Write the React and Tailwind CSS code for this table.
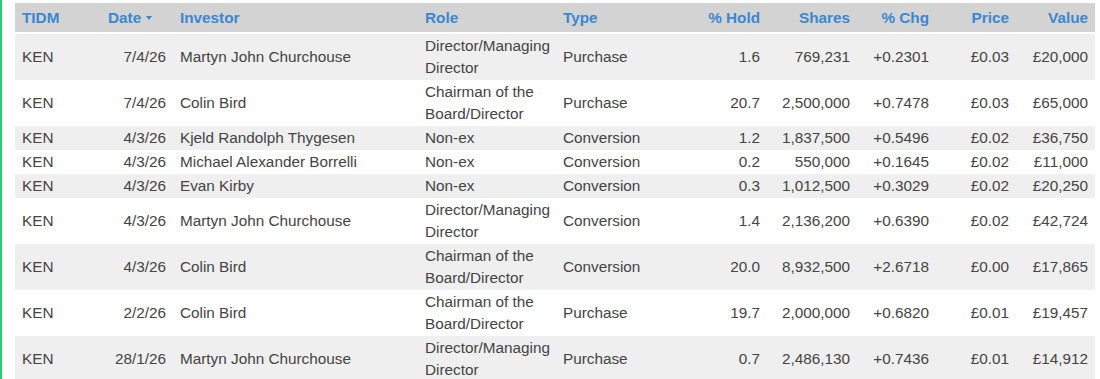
import React from "react";

const rows = [
  ["KEN", "7/4/26", "Martyn John Churchouse", "Director/Managing Director", "Purchase", "1.6", "769,231", "+0.2301", "£0.03", "£20,000"],
  ["KEN", "7/4/26", "Colin Bird", "Chairman of the Board/Director", "Purchase", "20.7", "2,500,000", "+0.7478", "£0.03", "£65,000"],
  ["KEN", "4/3/26", "Kjeld Randolph Thygesen", "Non-ex", "Conversion", "1.2", "1,837,500", "+0.5496", "£0.02", "£36,750"],
  ["KEN", "4/3/26", "Michael Alexander Borrelli", "Non-ex", "Conversion", "0.2", "550,000", "+0.1645", "£0.02", "£11,000"],
  ["KEN", "4/3/26", "Evan Kirby", "Non-ex", "Conversion", "0.3", "1,012,500", "+0.3029", "£0.02", "£20,250"],
  ["KEN", "4/3/26", "Martyn John Churchouse", "Director/Managing Director", "Conversion", "1.4", "2,136,200", "+0.6390", "£0.02", "£42,724"],
  ["KEN", "4/3/26", "Colin Bird", "Chairman of the Board/Director", "Conversion", "20.0", "8,932,500", "+2.6718", "£0.00", "£17,865"],
  ["KEN", "2/2/26", "Colin Bird", "Chairman of the Board/Director", "Purchase", "19.7", "2,000,000", "+0.6820", "£0.01", "£19,457"],
  ["KEN", "28/1/26", "Martyn John Churchouse", "Director/Managing Director", "Purchase", "0.7", "2,486,130", "+0.7436", "£0.01", "£14,912"],
];

// column widths and alignment
const cols = [
  { label: "TIDM", w: "w-[86px]", align: "text-left" },
  { label: "Date", w: "w-[72px]", align: "text-right", headAlign: "text-left", sort: true },
  { label: "Investor", w: "w-[245px]", align: "text-left" },
  { label: "Role", w: "w-[138px]", align: "text-left" },
  { label: "Type", w: "w-[124px]", align: "text-left" },
  { label: "% Hold", w: "w-[87px]", align: "text-right" },
  { label: "Shares", w: "w-[90px]", align: "text-right" },
  { label: "% Chg", w: "w-[79px]", align: "text-right" },
  { label: "Price", w: "w-[80px]", align: "text-right" },
  { label: "Value", w: "w-[79px]", align: "text-right" },
];

export default function App() {
  return (
    <div className="h-[379px] w-[1100px] overflow-hidden bg-white border-l-2 border-[#2ecc71] pl-[13px] pt-[3px] font-['Liberation_Sans',Arial,sans-serif] text-[15.3px] text-[#444]">
      <table className="table-fixed w-[1080px] border-separate border-spacing-0">
        <thead>
          <tr className="bg-[#d3d3d3]">
            {cols.map((c) => (
              <th
                key={c.label}
                className={`${c.w} ${c.headAlign || c.align} h-[31px] border-b-2 border-white px-[7px] font-bold leading-[22px] text-[#3b88d0]`}
              >
                {c.label}
                {c.sort && (
                  <svg className="ml-[5px] inline-block align-middle" width="6" height="4" viewBox="0 0 6 4">
                    <path d="M0 0h6L3 4z" fill="#3b88d0" />
                  </svg>
                )}
              </th>
            ))}
          </tr>
        </thead>
        <tbody>
          {rows.map((r, i) => (
            <tr key={i} className={i % 2 === 0 ? "bg-[#efefef]" : "bg-white"}>
              {r.map((cell, j) => (
                <td
                  key={j}
                  className={`${cols[j].align} px-[7px] py-px align-middle leading-[22px]`}
                >
                  {cell}
                </td>
              ))}
            </tr>
          ))}
        </tbody>
      </table>
    </div>
  );
}
